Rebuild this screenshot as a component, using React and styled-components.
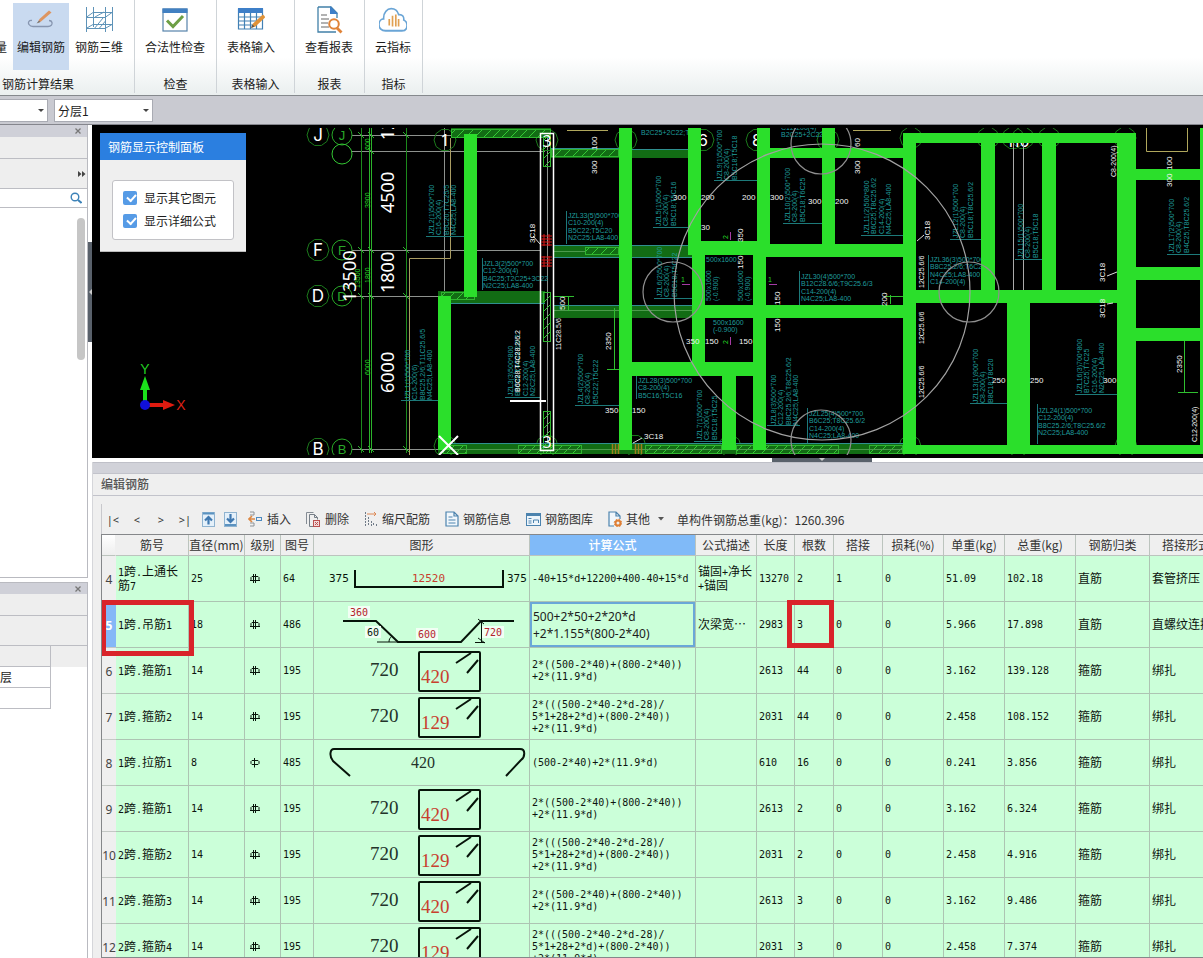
import React from "react";
import styled, { createGlobalStyle } from "styled-components";

const Global = createGlobalStyle`
  * { box-sizing: border-box; }
  html, body { margin: 0; padding: 0; background: #fff; }
  body, button, input, select, textarea {
    font-family: "Noto Sans CJK SC", sans-serif;
    font-size: 12px;
    color: #1c1c1c;
  }
  button { border: 0; background: none; padding: 0; margin: 0; cursor: pointer; white-space: nowrap; }
`;

const Page = styled.div`
  display: flex;
  flex-direction: column;
  height: 100vh;
  overflow: hidden;
`;

/* ---------- ribbon ---------- */

const Ribbon = styled.header`
  display: flex;
  flex: none;
  height: 96px;
  padding-bottom: 2px;
  border-bottom: 1px solid #85898d;
  background: linear-gradient(#fff 60%, #eaefef);
`;

const RibbonGroup = styled.section`
  display: flex;
  flex-direction: column;
  flex: none;
  width: ${(p) => p.$width}px;
  border-right: 1px solid #cfd4d8;
`;

const RibbonTools = styled.div`
  display: flex;
  justify-content: ${(p) => (p.$start ? "flex-start" : "center")};
  gap: 4px;
  height: 75px;
  padding: 3px ${(p) => p.$end || 0}px 3px 0;
`;

const RibbonTool = styled.button`
  display: flex;
  flex-direction: column;
  align-items: center;
  flex: none;
  width: ${(p) => p.$width || 60}px;
  height: 67px;
  padding-top: 3px;
  line-height: 18px;
  background: ${(p) => (p.$active ? "#c9daf0" : "transparent")};
  svg { width: 28px; height: 28px; margin-bottom: 4px; flex: none; }
`;

const ClippedTool = styled.div`
  display: flex;
  justify-content: flex-end;
  align-items: flex-start;
  flex: none;
  width: 9px;
  padding: 35px 2px 0 0;
  overflow: hidden;
  line-height: 18px;
`;

const RibbonCaption = styled.div`
  padding: 0 2px;
  line-height: 18px;
  text-align: ${(p) => (p.$start ? "left" : "center")};
`;

/* ---------- floor bar ---------- */

const FloorBar = styled.div`
  display: flex;
  flex: none;
  gap: 6px;
  height: 29px;
  padding: 3px 0 3px 0;
  background: #c9cad1;
  border-bottom: 1px solid #85868d;
`;

const SelectBox = styled.label`
  position: relative;
  width: ${(p) => p.$width}px;
  height: 23px;
  &::after {
    content: "";
    position: absolute;
    right: 4px;
    top: 10px;
    border: 3px solid transparent;
    border-top-color: #444;
  }
`;

const Select = styled.select`
  appearance: none;
  width: 100%;
  height: 23px;
  padding: 0 3px;
  border: 1px solid #a9abb3;
  border-left-width: ${(p) => (p.$open ? 0 : 1)}px;
  border-radius: 0;
  background: #fff;
`;

/* ---------- body and dock ---------- */

const Body = styled.div`
  display: flex;
  flex: 1;
  min-height: 0;
`;

const Dock = styled.aside`
  display: flex;
  flex-direction: column;
  flex: none;
  gap: 4px;
  width: 88px;
`;

const DockPanel = styled.section`
  display: flex;
  flex-direction: column;
  flex: ${(p) => (p.$grow ? "1 1 0" : "0 0 453px")};
  min-height: 0;
  border-right: 1px solid #b9bac0;
  border-bottom: ${(p) => (p.$grow ? "0" : "1px solid #b9bac0")};
`;

const DockHeader = styled.div`
  display: flex;
  justify-content: flex-end;
  align-items: center;
  height: 12px;
  padding-right: 5px;
  background: #cfd0d8;
  border-top: ${(p) => (p.$line ? "1px solid #b9bac0" : "0")};
  button { display: flex; }
`;

const DockStrip = styled.div`
  display: flex;
  justify-content: flex-end;
  align-items: center;
  flex: none;
  height: ${(p) => p.$height}px;
  padding-right: 1px;
  background: #eee;
  border-bottom: 1px solid #bcbdc3;
  button { display: flex; }
`;

const SearchRow = styled.label`
  display: flex;
  align-items: center;
  height: 19px;
  padding-right: 5px;
  border-bottom: 1px solid #bcbdc3;
  input { flex: 1; min-width: 0; border: 0; outline: 0; height: 16px; padding: 0 2px; }
`;

const ScrollArea = styled.div`
  display: flex;
  justify-content: flex-end;
  flex: 1;
  padding: 10px 2px 0 0;
`;

const ScrollThumb = styled.div`
  width: 8px;
  height: 142px;
  border-radius: 4px;
  background: #c6c6c6;
`;

const FloorTable = styled.table`
  width: 100%;
  border-spacing: 0;
  table-layout: fixed;
  th, td { height: 21px; padding: 0; border-bottom: 1px solid #bcbdc3; overflow: hidden; white-space: nowrap; font-weight: 400; line-height: 16px; }
  th { background: #eee; }
  th:first-child, td:first-child { width: 51px; border-right: 1px solid #bcbdc3; text-align: left; }
  th:last-child, td:last-child { border-bottom: 0; }
`;

const VSplitter = styled.div`
  display: flex;
  flex: none;
  width: 4px;
  padding-top: 117px;
  background: #fff;
`;

const VGrip = styled.button`
  display: flex;
  align-items: center;
  width: 4px;
  height: 100px;
  background: #59616b;
`;

const Main = styled.main`
  display: flex;
  flex-direction: column;
  flex: 1;
  min-width: 0;
`;

/* ---------- model view ---------- */

const Viewport = styled.div`
  position: relative;
  flex: none;
  height: 333px;
  overflow: hidden;
  background: #000;
  > svg { display: block; width: 100%; height: 100%; }
`;

const ControlPanel = styled.section`
  position: absolute;
  left: 8px;
  top: 8px;
  width: 146px;
  height: 119px;
  background: #efefef;
  border-bottom: 1px solid #bbb;
`;

const ControlTitle = styled.h2`
  margin: 0;
  padding: 0 8px;
  height: 27px;
  line-height: 27px;
  font-size: 12px;
  font-weight: 400;
  color: #fff;
  background: #2b7fe0;
`;

const OptionBox = styled.div`
  display: flex;
  flex-direction: column;
  gap: 5px;
  margin: 20px 12px 0;
  padding: 8px 10px;
  height: 60px;
  background: #fff;
  border: 1px solid #c2c2c6;
  border-radius: 3px;
`;

const Option = styled.label`
  display: flex;
  align-items: center;
  gap: 7px;
  line-height: 18px;
`;

const Tick = styled.input`
  appearance: none;
  position: relative;
  width: 14px;
  height: 14px;
  margin: 0;
  border-radius: 2px;
  background: #569be6;
  &:checked::before {
    content: "";
    position: absolute;
    left: 4px;
    top: 3px;
    width: 7px;
    height: 4px;
    border: solid #fff;
    border-width: 0 0 2px 2px;
    transform: rotate(-48deg);
  }
`;

const HSplitter = styled.div`
  display: flex;
  justify-content: center;
  flex: none;
  height: 4px;
  padding-left: 349px;
  background: #fff;
`;

const HGrip = styled.button`
  display: flex;
  justify-content: center;
  width: 100px;
  height: 4px;
  background: #59616b;
  svg { display: block; }
`;

/* ---------- rebar editor ---------- */

const Editor = styled.section`
  display: flex;
  flex-direction: column;
  flex: 1;
  min-height: 0;
  background: #efefef;
  border-left: 1px solid #d5d6da;
`;

const EditorGrab = styled.div`
  height: 12px;
  flex: none;
  background: #d1d2d9;
  border-top: 1px solid #bfc0c8;
  border-bottom: 1px solid #c2c3cb;
`;

const EditorTitle = styled.h2`
  flex: none;
  margin: 0;
  padding: 0 8px;
  height: 22px;
  line-height: 20px;
  font-size: 12px;
  font-weight: 500;
  color: #555;
  border-bottom: 1px solid #c2c3cb;
`;

const Toolbar = styled.div`
  display: flex;
  align-items: center;
  flex: none;
  height: 30px;
  margin: 8px 0 0 8px;
  border-left: 1px solid #c8c8cc;
  white-space: nowrap;
  button, span { color: #333; }
`;

const NavButton = styled.button`
  width: 22px;
  margin-right: 2px;
  font-family: "Noto Sans", sans-serif;
  font-size: 11px;
`;

const IconButton = styled.button`
  display: flex;
  margin-left: ${(p) => p.$gap}px;
`;

const ToolButton = styled.button`
  display: flex;
  align-items: center;
  gap: 4px;
  margin-left: ${(p) => p.$gap}px;
  line-height: 18px;
`;

const CaretSlot = styled.i`
  display: flex;
  padding-left: 4px;
`;

const Total = styled.span`
  margin-left: 12px;
`;

const GridWrap = styled.div`
  flex: 1;
  min-height: 0;
  margin-left: 8px;
  overflow: hidden;
  border: 1px solid #85878a;
  border-right: 0;
`;

const Grid = styled.table`
  width: 1121px;
  table-layout: fixed;
  border-spacing: 0;
  background: #cbffd9;
`;

const HeadCell = styled.th`
  height: 21px;
  padding: 0;
  overflow: hidden;
  white-space: nowrap;
  line-height: 18px;
  font-weight: ${(p) => (p.$current ? 500 : 400)};
  color: ${(p) => (p.$current ? "#fff" : "#333")};
  background: ${(p) => (p.$current ? "#80baf8" : p.$corner ? "linear-gradient(#fff, #eee)" : "#efefef")};
  border-right: 1px solid ${(p) => (p.$corner ? "#efefef" : "#bcc4be")};
  border-bottom: 1px solid #bcc4be;
`;

const IndexCell = styled.th`
  position: relative;
  height: 46px;
  padding: 2px 0 0 0;
  text-align: center;
  font-family: "Noto Sans", sans-serif;
  font-size: 12px;
  line-height: 16px;
  font-weight: ${(p) => (p.$current ? 700 : 400)};
  color: ${(p) => (p.$current ? "#fff" : "#444")};
  background: ${(p) => (p.$current ? "#84b7f7" : "#efefef")};
  border-bottom: 1px solid #c4c8c5;
`;

const Cell = styled.td`
  position: relative;
  height: 46px;
  padding: 0 0 0 ${(p) => (p.$flush ? 0 : 2)}px;
  white-space: pre;
  font-family: "DejaVu Sans Mono", "Noto Sans CJK SC", monospace;
  font-size: 10px;
  line-height: 12px;
  color: #0d140f;
  border-right: 1px solid #adc4b3;
  border-bottom: 1px solid #adc4b3;
  svg { display: block; }
`;

const Han = styled.span`
  font-family: "Noto Sans CJK SC", sans-serif;
  font-size: 12px;
`;

const GradeBox = styled.div`
  padding-left: 3px;
`;

const Formula = styled.textarea`
  display: block;
  width: 165px;
  height: 45px;
  margin: 0;
  padding: 4px 1px;
  resize: none;
  overflow: hidden;
  outline: 0;
  border: 2px solid #6aa7d8;
  background: #cbffd9;
  font-family: "Noto Sans", sans-serif;
  font-size: 12px;
  line-height: 17px;
`;

const Marker = styled.span`
  position: absolute;
  z-index: 2;
  left: ${(p) => p.$left}px;
  top: -2px;
  width: ${(p) => p.$width}px;
  height: ${(p) => p.$height}px;
  border: 5px solid #d9232a;
  pointer-events: none;
`;

/* ---------- ribbon icons ---------- */

const EditRebarIcon = () => (
  <svg viewBox="0 0 28 28" fill="none">
    <path d="M5 14.500C2 14 0.500 16.500 2 18.500C3 20 4.500 20.500 6 20.500H21C24 20.500 25.500 18.500 25 16.500C24.500 14.500 23 14.500 22 14.500" stroke="#8796b0" strokeWidth="1.300" />
    <path d="M10.500 17l2-4L22 4.500l2.500 2L14 15.500z" fill="#dd9560" />
    <path d="M9.500 17.500l2.500-3 1.500 1.500z" fill="#777" />
  </svg>
);
const Rebar3dIcon = () => (
  <svg viewBox="0 0 28 28" fill="none" stroke="#5e93b8" strokeWidth="1">
    <path d="M1.500 1v25M8.500 1v20M20.500 1v25M27.500 1v24M1 11.500h20M1 22.500h20M8 6.500h20M8 18.500h20M1 11.500l7-5M1 22.500l7-4M20 11.500l7-5M20 22.500l7-4M9 23l9-11M10 11l9-5M14.500 22l6-7" />
  </svg>
);
const CheckIcon = () => (
  <svg viewBox="0 0 28 28" fill="none">
    <rect x="2" y="3" width="24" height="22" fill="#fff" stroke="#5683ab" strokeWidth="1.200" />
    <path d="M1.500 2.500h25V7h-25z" fill="#4180c2" />
    <path d="M6 14.500l6 6L22 10" stroke="#6d9f45" strokeWidth="3" />
  </svg>
);
const TableInputIcon = () => (
  <svg viewBox="0 0 28 28" fill="none">
    <path d="M1.500 3h24v20h-24zM1.500 11h24M1.500 15h20M1.500 19h18M7.500 7v16M13.500 7v16M19.500 7v16" stroke="#4180b4" strokeWidth="1.200" />
    <path d="M1 2h25v5H1z" fill="#3e7fc8" />
    <path d="M14 22l2-4.500L26 8.500l2.500 2.500L18.500 20.500z" fill="#e09238" />
    <path d="M14 22l1.500-3.500 2 2z" fill="#555" />
  </svg>
);
const ReportIcon = () => (
  <svg viewBox="0 0 28 28" fill="none">
    <path d="M3 1h13l6 6v5M3 1v25h18" stroke="#4180a8" strokeWidth="1.300" />
    <path d="M15 0l8 8h-8z" fill="#3e7fc8" />
    <path d="M6 9h6M6 13h8M6 17h7M6 21h8" stroke="#666" strokeWidth="1.200" />
    <circle cx="19" cy="18" r="4.800" stroke="#e08338" strokeWidth="2" fill="#fff" />
    <path d="M22 22l4.500 4.500" stroke="#e08338" strokeWidth="2.800" />
  </svg>
);
const CloudIcon = () => (
  <svg viewBox="1 1 30 26" fill="none" preserveAspectRatio="none">
    <path d="M8 24C3.500 24 1 21.500 1 18.500C1 15 3.500 13 6 13C5.500 7 10 3.500 14 3.500C18 3.500 21 5.500 22 9C26 8.500 28 11 27.500 14C30 15 31 17 31 19C31 22 29 24 25.500 24z" stroke="#6aa5d6" strokeWidth="1.700" />
    <path d="M12 13v6M15.500 10v10M19 9v11M22 13v7" stroke="#e0a052" strokeWidth="1.800" />
  </svg>
);

const ribbonGroups = [
  { name: "检查", width: 82, end: 1, tool: "合法性检查", Icon: CheckIcon },
  { name: "表格输入", width: 78, end: 9, tool: "表格输入", Icon: TableInputIcon },
  { name: "报表", width: 70, end: 1, tool: "查看报表", Icon: ReportIcon },
  { name: "指标", width: 58, end: 1, tool: "云指标", Icon: CloudIcon },
];

const CloseIcon = () => (
  <svg width="8" height="8" viewBox="0 0 8 8"><path d="M1.500 1.500l5 5M6.500 1.500l-5 5" stroke="#777" strokeWidth="1.300" /></svg>
);
const SearchIcon = () => (
  <svg width="12" height="12" viewBox="0 0 12 12" fill="none" stroke="#3c82b8" strokeWidth="1.400">
    <circle cx="5" cy="5" r="3.800" /><path d="M8 8l3.500 3" strokeWidth="2" />
  </svg>
);
const ExpandIcon = () => (
  <svg width="8" height="8" viewBox="0 0 8 8" fill="#444"><path d="M0 1l3.500 3L0 7zM4 1l3.500 3L4 7z" /></svg>
);

/* ---------- toolbar icons ---------- */

const Arrow = ({ down }) => (
  <svg width="13" height="15" viewBox="0 0 13 15" fill="none">
    <rect x="0.500" y="0.500" width="12" height="14" fill="#e4f0fa" stroke="#8fb3d0" />
    <path d={down ? "M1 13h11" : "M1 1.500h11"} stroke="#5b92c0" strokeWidth="2" />
    <path d={down ? "M6.500 2v8M3 6.500l3.500 3.500L10 6.500" : "M6.500 12.500V5M3 8.500L6.500 5 10 8.500"} stroke="#3f78b0" strokeWidth="2.200" />
  </svg>
);
const InsertIcon = () => (
  <svg width="15" height="17" viewBox="0 0 15 17" fill="none">
    <path d="M2 1h4v3H2M2 12h4v3H2" stroke="#8c9298" />
    <path d="M7 8H1M4 5L1 8l3 3" stroke="#dd8844" strokeWidth="1.600" />
    <rect x="8.500" y="6.500" width="5" height="3" stroke="#4d8abf" />
  </svg>
);
const DeleteIcon = () => (
  <svg width="16" height="17" viewBox="0 0 16 17" fill="none">
    <path d="M1.500 13V1.500h7" stroke="#858c94" />
    <path d="M4.500 15.500v-12h5l3 3v2M9.500 3.500v3h3M4.500 15.500H8" stroke="#777f88" />
    <rect x="8.500" y="9.500" width="6" height="6" fill="#f3dada" stroke="#bb5050" />
    <path d="M10 11l3 3M13 11l-3 3" stroke="#bb5050" />
  </svg>
);
const ScaleIcon = () => (
  <svg width="14" height="17" viewBox="0 0 14 17" fill="none">
    <path d="M1.500 1v14M4.500 6v9M7.500 10v5M9.500 12v3M12.500 13v2" stroke="#707b88" strokeDasharray="2 1" />
    <path d="M3 3h9M10 1l2 2-2 2" stroke="#dd8855" />
  </svg>
);
const InfoIcon = () => (
  <svg width="14" height="16" viewBox="0 0 14 16" fill="none">
    <path d="M1 1h8l4 4v10H1zM9 1v4h4" fill="#f1f7fc" stroke="#4c83ae" strokeWidth="1.200" />
    <path d="M3.500 6h4M3.500 9h7M3.500 12h7" stroke="#4c83ae" />
  </svg>
);
const LibraryIcon = () => (
  <svg width="15" height="13" viewBox="0 0 15 13" fill="none">
    <rect x="0.500" y="0.500" width="14" height="12" fill="#edf5fb" stroke="#4c83ae" />
    <path d="M0 0h15v3H0z" fill="#4c83ae" />
    <path d="M2.500 5.500h3M2.500 8h3M2.500 10h3M7.500 10V7h5v3" stroke="#4c83ae" />
  </svg>
);
const OtherIcon = () => (
  <svg width="14" height="16" viewBox="0 0 14 16" fill="none">
    <path d="M6 15H1V1h7l4 4v3M8 1v4h4" fill="#f1f7fc" stroke="#4c83ae" strokeWidth="1.200" />
    <circle cx="10" cy="12" r="2.500" stroke="#df7f35" strokeWidth="2" />
    <circle cx="10" cy="12" r="3.800" stroke="#df7f35" strokeDasharray="1.500 1.500" />
  </svg>
);
const Caret = () => (
  <svg width="7" height="4" viewBox="0 0 7 4"><path d="M0 0h6L3 3.500z" fill="#555" /></svg>
);

/* ---------- model drawing ---------- */

const CAD_FONT = '"Liberation Sans", sans-serif';
const AXIS_FONT = 'Inter, "Noto Sans", sans-serif';

const Note = ({ x, y, lines, up, color = "#1f9c9c", size = 7, step = 7.4 }) => (
  <g transform={`translate(${x} ${y})${up ? " rotate(-90)" : ""}`} fill={color} fontFamily={CAD_FONT} fontSize={size}>
    {lines.map((t, i) => <text key={i} y={i * step}>{t}</text>)}
  </g>
);

const markSize = (t) => (t.length > 4 ? 7 : 8);

const Bubble = ({ x, y, r = 11, color = "#1c7a1c" }) => {
  const pts = [...Array(10)].map((_, i) => {
    const a = (Math.PI / 5) * i;
    return `${x + r * Math.cos(a)},${y + r * Math.sin(a)}`;
  });
  return <polygon points={pts.join(" ")} fill="none" stroke={color} />;
};

const walls = [
  [464, 134, 13, 163], [438, 296, 13, 154], [619, 128, 13, 322], [688, 128, 13, 120], [692, 241, 13, 124],
  [757, 128, 13, 122], [753, 241, 13, 209], [688, 241, 78, 14], [757, 244, 156, 13], [692, 305, 221, 13],
  [619, 362, 147, 14], [722, 376, 14, 74], [822, 128, 13, 122], [757, 148, 156, 10], [903, 133, 13, 321],
  [903, 133, 233, 10], [981, 133, 14, 160], [903, 290, 233, 13], [916, 445, 900, 9], [1042, 133, 14, 160],
  [1007, 290, 23, 164], [1117, 133, 19, 321], [1136, 169, 600, 11], [1136, 267, 600, 13], [1136, 328, 600, 13],
  [1200, 128, 13, 326],
];
const beams = [
  [451, 128, 100, 10], [438, 291, 107, 12], [438, 443, 478, 11], [551, 148, 68, 10],
  [632, 149, 56, 9], [553, 245, 139, 12], [553, 305, 139, 13],
];
const hatched = [
  [451, 129, 100, 9], [441, 292, 34, 8], [443, 445, 24, 9], [518, 445, 64, 9], [551, 149, 68, 8], [585, 247, 34, 8],
  [543, 137, 8, 30], [543, 292, 8, 50], [543, 411, 8, 43], [645, 445, 77, 9], [736, 445, 103, 9], [869, 445, 34, 9],
];

const upNotes = [
  [434, 235, ["JZL2(1)500*700", "C16-200(4)", "B5C20;T7C25/5", "N4C25;LA8-400"]],
  [410, 400, ["JZL1(1)500*700", "C16-200(6)", "B8C25.2/6;T11C25.6/5", "N4C25;LA8-400"]],
  [513, 396, ["JZL3(3)500*800", "B6C28;T4C28.2/6.2", "C12-200(4)", "N2C25;LA8-400"]],
  [661, 226, ["JZL5(1)500*700", "C8-200(4)", "B5C18;T5C16"]],
  [662, 297, ["JZL6(2)500*700", "C8-200(4)", "B5C18;T5C22"]],
  [722, 180, ["JZL9(1)500*700", "C8-200(4)", "B5C18;T5C18"]],
  [583, 404, ["JZL4(2)500*700", "C8-200(4)", "B5C22;T5C22"]],
  [702, 440, ["JZL7(1)500*700", "C8-200(4)", "B5C18;T5C25"]],
  [776, 425, ["JZL8(3)500*700", "C12-200(4)", "B8C25.2/6;T8C25.6/2", "N4C25;LA8-400"]],
  [790, 222, ["JZL10(2)500*700", "C8-200(4)", "B5C18;T6C25"]],
  [869, 234, ["JZL11(2)500*800", "B6C25;T8C25.6/2", "C14-200(4)", "N4C25;LA8-400"]],
  [958, 238, ["JZL12(1)500*700", "C8-200(4)", "B5C18;T8C25.6/2"]],
  [978, 403, ["JZL13(1)900*700", "C8-200(4)", "B8C18;T8C20"]],
  [1023, 258, ["JZL15(1)500*700", "C8-200(4)", "B5C18;T5C18"]],
  [1174, 253, ["JZL17(2)500*700", "C8-200(4)", "B4C25;T8C25.6/2"]],
  [1082, 393, ["JZL16(3)700*800", "B7C25;T7C25", "C16-200(4)", "N2C25;LA8-400"]],
  [711, 301, ["500x1600", "(-0.900)"]],
  [743, 301, ["500x1600", "(-0.900)"]],
];
const flatNotes = [
  [483, 266, ["JZL3(2)500*700", "C12-200(4)", "B4C25;T2C25+3C22", "N2C25;LA8-400"]],
  [568, 218, ["JZL33(5)500*700", "C10-200(4)", "B5C22;T5C20", "N2C25;LA8-400"]],
  [638, 383, ["JZL28(3)500*700", "C8-200(4)", "B5C16;T5C16"]],
  [641, 135, ["B2C25+2C22;T4"]],
  [781, 130, ["C12-200(4)", "B2C25+2C22"]],
  [801, 279, ["JZL30(4)500*700", "B12C28.6/6;T9C25.6/3", "C14-200(4)", "N4C25;LA8-400"]],
  [809, 416, ["JZL25(4)500*700", "B6C25;T8C25.6/2", "C14-200(4)", "N4C25;LA8-400"]],
  [930, 262, ["JZL36(3)500*700", "B8C25.2/6;T6C20", "N4C25;LA8-400", "C14-200(4)"]],
  [1038, 413, ["JZL24(1)500*700", "C12-200(4)", "B8C25.2/6;T8C25.6/2", "N2C25;LA8-400"]],
  [706, 262, ["500x1600"]],
  [713, 325, ["500x1600", "(-0.900)"]],
];
const upMarks = [
  [597, 150, "100"], [597, 174, "300"], [743, 242, "350"], [743, 269, "150"], [565, 310, "500"], [611, 350, "2350"],
  [561, 350, "11C28.5/6"], [535, 243, "3C18"], [780, 305, "150"], [780, 332, "150"], [860, 147, "60"], [860, 174, "300"],
  [930, 240, "3C18"], [924, 288, "12C25.6/6"], [924, 344, "12C25.6/6"], [924, 398, "12C25.6/6"], [1116, 177, "C8-200(4)"],
  [1105, 282, "3C18"], [1105, 318, "3C18"], [1172, 170, "100"], [1172, 187, "300"], [1182, 373, "2350"],
  [1197, 442, "C12-200(4)"], [887, 306, "200"],
];
const flatMarks = [
  [673, 200, "300"], [701, 200, "200"], [742, 200, "200"], [770, 200, "300"], [701, 230, "30"], [686, 344, "350"],
  [705, 344, "150"], [739, 344, "150"], [605, 413, "350"], [632, 413, "150"], [644, 439, "3C18"], [808, 204, "300"],
  [835, 204, "200"], [992, 383, "250"], [1030, 383, "250"], [1103, 383, "300"],
];

const bigDims = [[394, 213, "4500"], [394, 293, "1800"], [394, 393, "6000"], [356, 302, "13500"], [394, 140, "12"]];
const gridRows = [["J", 135], ["F", 250], ["D", 296], ["B", 449]];
const gridMarks = [
  [445, 140], [547, 140], [626, 140], [703, 140], [757, 140], [828, 140], [988, 138], [1013, 138], [1023, 138],
  [1049, 138], [1125, 138], [911, 138], [445, 446], [547, 446], [635, 446], [730, 446], [910, 446], [1018, 446], [1126, 446],
];

const Model = () => (
  <svg role="img" aria-label="结构平面图">
    <defs>
      <pattern id="hatch" width="9" height="9" patternUnits="userSpaceOnUse">
        <path d="M0 9L9 0M-2 2L2 -2M7 11L11 7" stroke="#35c935" />
      </pattern>
      <clipPath id="sheet"><rect x="92" y="128" width="3000" height="327" /></clipPath>
    </defs>
    <g transform="translate(-92 -125)">
      <g clipPath="url(#sheet)" fill="none">
        <path d="M352 135.500H540M352 151.500H545M352 250.500H540M352 296.500H545M352 449.500H438M444.500 128V292M547.500 138V450" stroke="#8d918d" />
        <path d="M361.500 128V453M406.500 128V453" stroke="#1c8a1c" />
        <path d="M369.500 128V453M371.500 128V453" stroke="#2bb32b" />
        <path d="M358 132l6 6M368 132l6 6M403 132l6 6M358 247l6 6M368 247l6 6M403 247l6 6M358 293l6 6M368 293l6 6M403 293l6 6M358 446l6 6M368 446l6 6M403 446l6 6M368 148l6 6" stroke="#2bb32b" />
        <path d="M450.500 138V258.500H409.500V455" stroke="#a99c62" />
        <path d="M567 130.500h41M853 130.500h38M1146.500 128v23.500h41V128" stroke="#b0a75c" />

        {gridRows.map(([name, y]) => (
          <g key={name}>
            <Bubble x={318} y={y} />
            <circle cx="342" cy={y} r="10" stroke="#28a828" />
            <text x="318" y={y + 6} textAnchor="middle" fill="#fff" fontFamily={AXIS_FONT} fontSize="17">{name}</text>
            <text x="342" y={y + 5} textAnchor="middle" fill="#28a828" fontFamily={CAD_FONT} fontSize="13">{name}</text>
          </g>
        ))}
        <circle cx="342" cy="154" r="10" stroke="#35c935" />
        {gridMarks.map(([x, y]) => <Bubble key={`${x}-${y}`} x={x} y={y} />)}
        <g fill="#fff" fontFamily={AXIS_FONT} fontSize="16" textAnchor="middle">
          <text x="703" y="146">6</text>
          <text x="757" y="146">8</text>
          <text x="1018" y="147">110</text>
        </g>

        {beams.map((b, i) => <rect key={i} x={b[0]} y={b[1]} width={b[2]} height={b[3]} fill="#126c14" />)}
        {hatched.map((b, i) => (
          <rect key={i} x={b[0] + 0.5} y={b[1] + 0.5} width={b[2] - 1} height={b[3] - 1} fill="url(#hatch)" stroke="#2fb52f" />
        ))}
        <path d="M451 303.500h94M553 245.500h139M553 257.500h139M551 148.500h68M632 149.500h56M553 305.500h139M438 443.500h465" stroke="#2f8f8f" />
        <path d="M553 310.500h139M553 251.500h32M438 449.500h465" stroke="#4c9a4c" />
        <path d="M1013.500 143V290M1023.500 143V290" stroke="#aaa" />

        {upNotes.map((n, i) => <Note key={i} up x={n[0]} y={n[1]} lines={n[2]} />)}
        {flatNotes.map((n, i) => <Note key={i} x={n[0]} y={n[1]} lines={n[2]} />)}
        <Note up x={520} y={392} color="#fff" lines={["B6C28;T4C28.2/6.2"]} />
        <path
          d="M426 236.500h38M401 400.500h37M505 397.500h35M482.500 258v32M566.500 211v33M653 227.500h35M654 298.500h38M714 180.500h43M575 405.500h44M636.500 376v23M694 441.500h28M767 425.500h33M783 223.500h39M861 235.500h42M950 239.500h31M928.500 255v35M799.500 271v34M807.500 408v35M970 403.500h37M1015 259.500h27M1167 254.500h33M1075 394.500h42M1037.500 404v40"
          stroke="#1d7a7a"
        />

        {walls.map((w, i) => <rect key={i} x={w[0]} y={w[1]} width={w[2]} height={w[3]} fill="#2bdf2b" />)}

        <circle cx="822" cy="292" r="148" stroke="#a2a2a2" strokeWidth="1.200" />
        {[[673, 292], [821, 144], [821, 440], [969, 292]].map(([x, y]) => (
          <circle key={`${x}-${y}`} cx={x} cy={y} r="30" stroke="#8f8f8f" strokeWidth="1.200" />
        ))}

        <path d="M553 296.500h21M568.500 296v15M614.500 308v61M607 369.500h12M885 296.500h18M890.500 295v9M1184.500 341v51M1178 392.500h20" stroke="#2fbf2f" />
        <rect x="540.500" y="133.500" width="13" height="317" stroke="#fff" strokeWidth="1.500" />
        <path d="M541 236h11M541 239h11M541 242h11M541 245h11M541 257h11M541 260h11M541 263h11M541 266h11M544 234v12M549 234v12M544 256v11M549 256v11" stroke="#d91717" />
        <path d="M612.500 444v10M615.500 444v10M618.500 444v10M635.500 444v10M638.500 444v10M641.500 444v10" stroke="#a07d1c" strokeWidth="1.500" />
        <path d="M510 401h36" stroke="#fff" strokeWidth="2" />
        <path d="M439 436l19 19M458 436l-19 19" stroke="#fff" strokeWidth="2" />
        <path d="M533 236l7 8M633 443l9-5M917 241l7-6M1107 276l10-4M1107 304l6-1" stroke="#ddd" />
        <path d="M682 284.500h8M769 284.500h8M730.500 232v8M730.500 337v8" stroke="#a43ba4" />

        {upMarks.map((m, i) => <Note key={i} up x={m[0]} y={m[1]} size={markSize(m[2])} color="#f4f4f4" lines={[m[2]]} />)}
        {flatMarks.map((m, i) => <Note key={i} x={m[0]} y={m[1]} size={markSize(m[2])} color="#f4f4f4" lines={[m[2]]} />)}
        {[[370, 150, "600"], [370, 208, "3900"], [370, 283, "1800"], [370, 375, "6000"], [360, 288, "13500"], [728, 239, "2"], [728, 344, "2"]].map((m, i) => (
          <Note key={i} up x={m[0]} y={m[1]} color="#25d625" lines={[m[2]]} />
        ))}
        <Note x={681} y={282} color="#25d625" lines={["1"]} />
        <Note x={768} y={282} color="#25d625" lines={["1"]} />
        {bigDims.map((d, i) => (
          <text key={i} transform={`translate(${d[0]} ${d[1]}) rotate(-90)`} fill="#fff" fontFamily='"Noto Sans", sans-serif' fontSize="18">{d[2]}</text>
        ))}
        <g fill="#fff" fontFamily='"Noto Sans", sans-serif' fontSize="16" textAnchor="middle">
          <text x="445" y="146">1</text>
          <text x="547" y="147">3</text>
          <text x="547" y="448">3</text>
        </g>
      </g>

      <path d="M143 403V390h-3l5-14 5 14h-3v13z" fill="#1be01b" />
      <path d="M147 403h16v-3l12 5-12 5v-3h-16z" fill="#e01b10" />
      <circle cx="145" cy="405" r="5" fill="#1010d8" />
      <text x="145" y="374" textAnchor="middle" fill="#22cc22" fontFamily='"Liberation Sans", sans-serif' fontSize="14">Y</text>
      <text x="181" y="410" textAnchor="middle" fill="#dd2015" fontFamily='"Liberation Sans", sans-serif' fontSize="14">X</text>
    </g>
  </svg>
);

/* ---------- rebar shapes ---------- */

const INK = "#07140a";
const RED = "#c8402e";
const serif = '"Liberation Serif", serif';
const mono = '"DejaVu Sans Mono", monospace';

const LongBar = () => (
  <svg width="215" height="45" fill="none">
    <path d="M41 14V31H189V14" stroke={INK} strokeWidth="2" />
    <g fontFamily={mono} fontSize="11" fill={INK}>
      <text x="15" y="26">375</text>
      <text x="193" y="26">375</text>
      <text x="98" y="26" fill={RED}>12520</text>
    </g>
  </svg>
);
const HangerBar = () => (
  <svg width="215" height="45" fill="none">
    <path d="M29 19H62L84 40H147L167 19H200" stroke={INK} strokeWidth="2" />
    <path d="M63 40h22M75 40c0-3 1-4 3-6M167.500 20v20M164 36l7 5M164 17l6 5M161 40.500h10" stroke={INK} />
    <g fill="#f1fff4"><path d="M34 4h22v12H34zM51 24h16v12H51zM102 26h22v12h-22zM168 24h22v12h-22z" /></g>
    <g fontFamily={mono} fontSize="10" fill="#b5242c">
      <text x="36" y="14">360</text>
      <text x="53" y="34" fill={INK}>60</text>
      <text x="104" y="36">600</text>
      <text x="170" y="34">720</text>
    </g>
  </svg>
);
const Stirrup = ({ value }) => (
  <svg width="215" height="45" fill="none">
    <rect x="105" y="4" width="61" height="39" rx="1" stroke={INK} strokeWidth="2" />
    <path d="M142 15L157 5M153 25L164 12" stroke={INK} strokeWidth="2" />
    <g fontFamily={serif} fontSize="19">
      <text x="56" y="28" fill="#23332a">720</text>
      <text x="107" y="35" fill={RED}>{value}</text>
    </g>
  </svg>
);
const TieBar = () => (
  <svg width="215" height="45" fill="none">
    <path d="M36 36L19 21C15 16 16 9 20 9H206C212 9 211 17 207 20L192 36" stroke={INK} strokeWidth="2" />
    <text x="97" y="28" fontFamily={serif} fontSize="16" fill="#23332a">420</text>
  </svg>
);

const Grade = ({ plain }) => (
  <svg width="10" height="10" viewBox="0 0 10 10" fill="none" stroke={INK} role="img" aria-label={plain ? "一级" : "三级"}>
    {plain
      ? <path d="M2 2.500h6l1 1v2l-1 1h-6l-1-1v-2zM4.500 0v9.500" />
      : <path d="M2 2.500h6l1 1v2l-1 1h-6l-1-1v-2zM3.500 0v9M5.500 0v9M0 6.500h10" />}
  </svg>
);

const pieces = (text) => text.split(/([\u4e00-\u9fff…]+)/).map((t, i) => (i % 2 ? <Han key={i}>{t}</Han> : t));

const columns = [
  ["筋号", 73], ["直径(mm)", 56], ["级别", 36], ["图号", 33], ["图形", 216], ["计算公式", 166], ["公式描述", 61],
  ["长度", 38], ["根数", 39], ["搭接", 49], ["损耗(%)", 61], ["单重(kg)", 61], ["总重(kg)", 71], ["钢筋归类", 74], ["搭接形式", 73],
];

const F420 = "2*((500-2*40)+(800-2*40))\n+2*(11.9*d)";
const F129 = "2*(((500-2*40-2*d-28)/\n5*1+28+2*d)+(800-2*40))\n+2*(11.9*d)";
const stirrup = (no, name, value, count, weight, total) => ({
  no, name, dia: "14", code: "195", shape: <Stirrup value={value} />,
  formula: value === "420" ? F420 : F129, desc: "", length: value === "420" ? "2613" : "2031", count, lap: "0",
  weight, total, kind: "箍筋", joint: "绑扎",
});

const rows = [
  { no: 4, name: "1跨.上通长\n筋7", dia: "25", code: "64", shape: <LongBar />, formula: "-40+15*d+12200+400-40+15*d", desc: "锚固+净长\n+锚固", length: "13270", count: "2", lap: "1", weight: "51.09", total: "102.18", kind: "直筋", joint: "套管挤压" },
  { no: 5, current: true, name: "1跨.吊筋1", dia: "18", code: "486", shape: <HangerBar />, formula: "500+2*50+2*20*d\n+2*1.155*(800-2*40)", desc: "次梁宽…", length: "2983", count: "3", lap: "0", weight: "5.966", total: "17.898", kind: "直筋", joint: "直螺纹连接" },
  stirrup(6, "1跨.箍筋1", "420", "44", "3.162", "139.128"),
  stirrup(7, "1跨.箍筋2", "129", "44", "2.458", "108.152"),
  { no: 8, plain: true, name: "1跨.拉筋1", dia: "8", code: "485", shape: <TieBar />, formula: "(500-2*40)+2*(11.9*d)", desc: "", length: "610", count: "16", lap: "0", weight: "0.241", total: "3.856", kind: "箍筋", joint: "绑扎" },
  stirrup(9, "2跨.箍筋1", "420", "2", "3.162", "6.324"),
  stirrup(10, "2跨.箍筋2", "129", "2", "2.458", "4.916"),
  stirrup(11, "2跨.箍筋3", "420", "3", "3.162", "9.486"),
  stirrup(12, "2跨.箍筋4", "129", "3", "2.458", "7.374"),
];

const Row = ({ row }) => (
  <tr>
    <IndexCell scope="row" $current={row.current}>
      {row.no}
      {row.current && <Marker $left={-1} $width={93} $height={56} />}
    </IndexCell>
    <Cell>{pieces(row.name)}</Cell>
    <Cell>{row.dia}</Cell>
    <Cell><GradeBox><Grade plain={row.plain} /></GradeBox></Cell>
    <Cell>{row.code}</Cell>
    <Cell $flush>{row.shape}</Cell>
    <Cell $flush={row.current}>
      {row.current ? <Formula aria-label="计算公式" rows={2} defaultValue={row.formula} spellCheck={false} /> : row.formula}
    </Cell>
    <Cell>{pieces(row.desc)}</Cell>
    <Cell>{row.length}</Cell>
    <Cell>
      {row.count}
      {row.current && <Marker $left={-8} $width={47} $height={48} />}
    </Cell>
    <Cell>{row.lap}</Cell>
    <Cell>0</Cell>
    <Cell>{row.weight}</Cell>
    <Cell>{row.total}</Cell>
    <Cell>{pieces(row.kind)}</Cell>
    <Cell>{pieces(row.joint)}</Cell>
  </tr>
);

export default function App() {
  return (
    <Page lang="zh-CN">
      <Global />
      <Ribbon>
        <RibbonGroup $width={135}>
          <RibbonTools $start>
            <ClippedTool>量</ClippedTool>
            <RibbonTool $active $width={56}><EditRebarIcon />编辑钢筋</RibbonTool>
            <RibbonTool $width={52}><Rebar3dIcon />钢筋三维</RibbonTool>
          </RibbonTools>
          <RibbonCaption $start>钢筋计算结果</RibbonCaption>
        </RibbonGroup>
        {ribbonGroups.map(({ name, width, end, tool, Icon }) => (
          <RibbonGroup key={name} $width={width}>
            <RibbonTools $end={end}>
              <RibbonTool><Icon />{tool}</RibbonTool>
            </RibbonTools>
            <RibbonCaption>{name}</RibbonCaption>
          </RibbonGroup>
        ))}
      </Ribbon>

      <FloorBar>
        <SelectBox $width={48}><Select $open aria-label="楼层"><option></option></Select></SelectBox>
        <SelectBox $width={99}><Select aria-label="分层"><option>分层1</option></Select></SelectBox>
      </FloorBar>

      <Body>
        <Dock>
          <DockPanel>
            <DockHeader><button aria-label="关闭"><CloseIcon /></button></DockHeader>
            <DockStrip $height={22} />
            <DockStrip $height={30}><button aria-label="展开"><ExpandIcon /></button></DockStrip>
            <SearchRow><input aria-label="搜索" /><SearchIcon /></SearchRow>
            <ScrollArea><ScrollThumb /></ScrollArea>
          </DockPanel>
          <DockPanel $grow>
            <DockHeader $line><button aria-label="关闭"><CloseIcon /></button></DockHeader>
            <DockStrip $height={22} />
            <DockStrip $height={30} />
            <FloorTable>
              <thead><tr><th></th><th></th></tr></thead>
              <tbody>
                <tr><td>层</td><td></td></tr>
                <tr><td></td><td></td></tr>
              </tbody>
            </FloorTable>
          </DockPanel>
        </Dock>

        <VSplitter>
          <VGrip aria-label="收起">
            <svg width="4" height="6" viewBox="0 0 4 6"><path d="M4 0v6L1 3z" fill="#ccc" /></svg>
          </VGrip>
        </VSplitter>

        <Main>
          <Viewport>
            <Model />
            <ControlPanel>
              <ControlTitle>钢筋显示控制面板</ControlTitle>
              <OptionBox>
                <Option><Tick type="checkbox" defaultChecked />显示其它图元</Option>
                <Option><Tick type="checkbox" defaultChecked />显示详细公式</Option>
              </OptionBox>
            </ControlPanel>
          </Viewport>
          <HSplitter>
            <HGrip aria-label="收起">
              <svg width="8" height="4" viewBox="0 0 8 4"><path d="M1 0h6L4 3z" fill="#ccc" /></svg>
            </HGrip>
          </HSplitter>

          <Editor>
            <EditorGrab />
            <EditorTitle>编辑钢筋</EditorTitle>
            <Toolbar>
              <NavButton>|&lt;</NavButton>
              <NavButton>&lt;</NavButton>
              <NavButton>&gt;</NavButton>
              <NavButton>&gt;|</NavButton>
              <IconButton $gap={4} aria-label="上移"><Arrow /></IconButton>
              <IconButton $gap={9} aria-label="下移"><Arrow down /></IconButton>
              <ToolButton $gap={11}><InsertIcon />插入</ToolButton>
              <ToolButton $gap={14}><DeleteIcon />删除</ToolButton>
              <ToolButton $gap={15}><ScaleIcon />缩尺配筋</ToolButton>
              <ToolButton $gap={15}><InfoIcon />钢筋信息</ToolButton>
              <ToolButton $gap={15}><LibraryIcon />钢筋图库</ToolButton>
              <ToolButton $gap={15}><OtherIcon />其他<CaretSlot><Caret /></CaretSlot></ToolButton>
              <Total>单构件钢筋总重(kg)：1260.396</Total>
            </Toolbar>
            <GridWrap>
              <Grid>
                <colgroup>
                  <col width="14" />
                  {columns.map(([name, width]) => <col key={name} width={width} />)}
                </colgroup>
                <thead>
                  <tr>
                    <HeadCell $corner />
                    {columns.map(([name]) => (
                      <HeadCell key={name} scope="col" $current={name === "计算公式"}>{name}</HeadCell>
                    ))}
                  </tr>
                </thead>
                <tbody>
                  {rows.map((row) => <Row key={row.no} row={row} />)}
                </tbody>
              </Grid>
            </GridWrap>
          </Editor>
        </Main>
      </Body>
    </Page>
  );
}
